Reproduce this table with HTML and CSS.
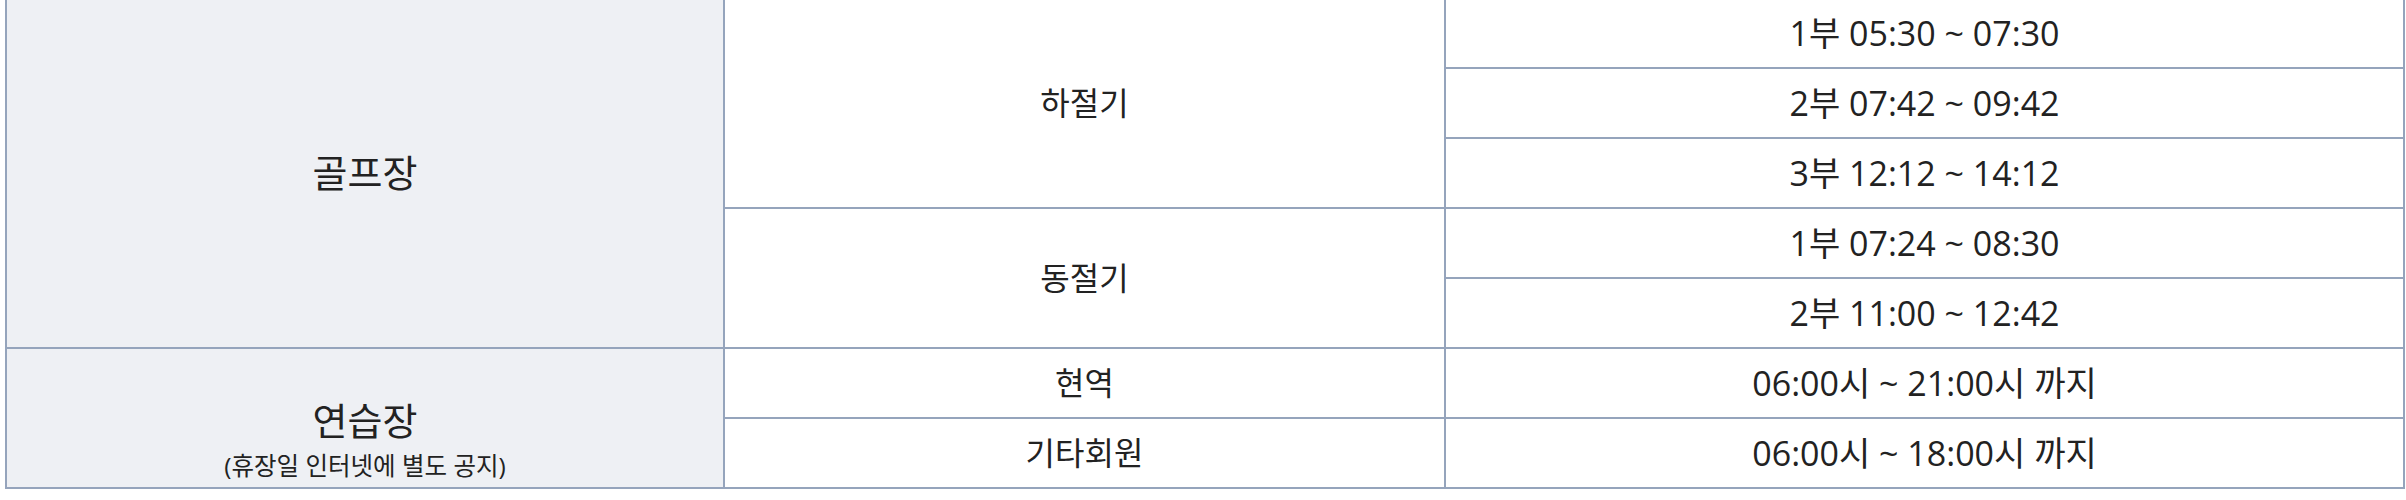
FILE: index.html
```html
<!DOCTYPE html>
<html lang="ko">
<head>
<meta charset="utf-8">
<title>이용시간</title>
<link rel="stylesheet" href="styles.css">
</head>
<body>
<table class="schedule">
  <colgroup>
    <col class="col-place">
    <col class="col-season">
    <col class="col-time">
  </colgroup>
  <tbody>
    <tr>
      <th class="place" rowspan="5">골프장</th>
      <td class="season" rowspan="3">하절기</td>
      <td class="time">1부 05:30 ~ 07:30</td>
    </tr>
    <tr><td class="time">2부 07:42 ~ 09:42</td></tr>
    <tr><td class="time">3부 12:12 ~ 14:12</td></tr>
    <tr>
      <td class="season" rowspan="2">동절기</td>
      <td class="time">1부 07:24 ~ 08:30</td>
    </tr>
    <tr><td class="time">2부 11:00 ~ 12:42</td></tr>
    <tr>
      <th class="place place-note" rowspan="2">연습장<span class="note">(휴장일 인터넷에 별도 공지)</span></th>
      <td class="season">현역</td>
      <td class="time">06:00시 ~ 21:00시 까지</td>
    </tr>
    <tr>
      <td class="season">기타회원</td>
      <td class="time">06:00시 ~ 18:00시 까지</td>
    </tr>
  </tbody>
</table>
</body>
</html>
```

FILE: styles.css
```css
html, body {
  margin: 0;
  padding: 0;
  background: #ffffff;
}

body {
  font-family: "Open Sans", "Noto Sans CJK KR", sans-serif;
  color: #222222;
}

.schedule {
  width: 2400px;
  margin: -3px 0 0 5px;
  table-layout: fixed;
  border-collapse: separate;
  border-spacing: 0;
  border-left: 2px solid #95a4bc;
  border-top: 2px solid #95a4bc;
}

.col-place { width: 718px; }
.col-season { width: 721px; }
.col-time { width: 959px; }

.schedule th,
.schedule td {
  height: 68px;
  padding: 0;
  border-right: 2px solid #95a4bc;
  border-bottom: 2px solid #95a4bc;
  text-align: center;
  vertical-align: middle;
  font-weight: 400;
  font-size: 32px;
  line-height: 1.2;
  box-sizing: content-box;
}

.schedule td.time {
  font-size: 34px;
}

.schedule th.place {
  background: #eef0f4;
  font-size: 38px;
  font-weight: 400;
}

.schedule th.place-note {
  padding-top: 42px;
  line-height: 54px;
}

.note {
  display: block;
  font-size: 24.5px;
  line-height: 38px;
}
```
